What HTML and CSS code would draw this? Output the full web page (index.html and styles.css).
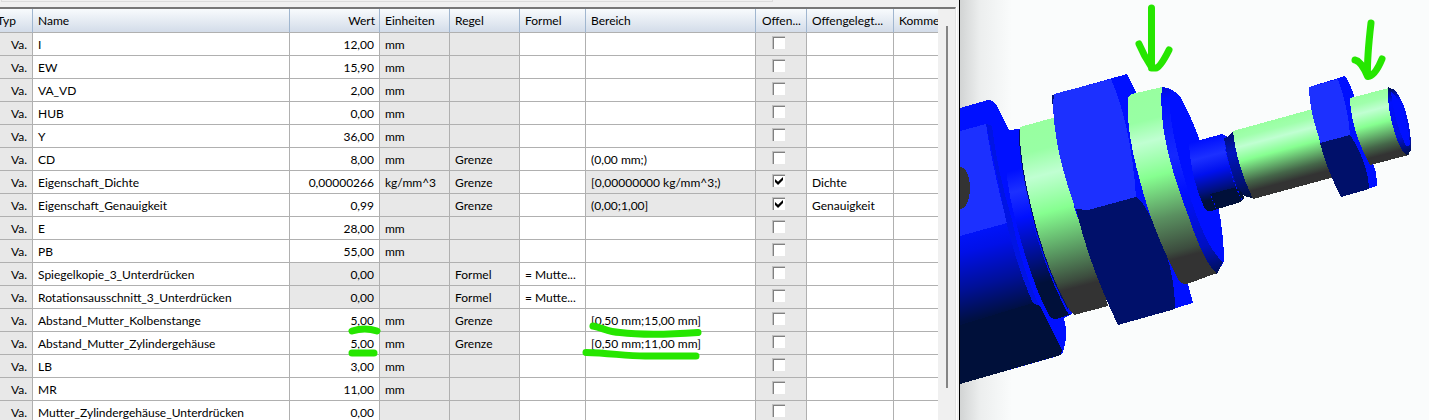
FILE: index.html
```html
<!DOCTYPE html>
<html lang="de">
<head>
<meta charset="utf-8">
<title>Variablentabelle</title>
<link rel="stylesheet" href="styles.css">
</head>
<body>
<main class="app">
<section class="panel">
<div class="group-edge"></div>
<div class="grid">
<div class="grid-view">
<table class="vars">
<colgroup><col class="c-typ"><col class="c-name"><col class="c-wert"><col class="c-einheit"><col class="c-regel"><col class="c-formel"><col class="c-bereich"><col class="c-offen"><col class="c-gelegt"><col class="c-komm"></colgroup>
<thead><tr><th>Typ</th><th>Name</th><th>Wert</th><th>Einheiten</th><th>Regel</th><th>Formel</th><th>Bereich</th><th>Offen...</th><th>Offengelegt...</th><th>Kommentar</th></tr></thead>
<tbody>
<tr><td>Va.</td><td>I</td><td>12,00</td><td>mm</td><td></td><td></td><td></td><td><input type="checkbox" aria-label="I offenlegen"></td><td></td><td></td></tr>
<tr><td>Va.</td><td>EW</td><td>15,90</td><td>mm</td><td></td><td></td><td></td><td><input type="checkbox" aria-label="EW offenlegen"></td><td></td><td></td></tr>
<tr><td>Va.</td><td>VA_VD</td><td>2,00</td><td>mm</td><td></td><td></td><td></td><td><input type="checkbox" aria-label="VA_VD offenlegen"></td><td></td><td></td></tr>
<tr><td>Va.</td><td>HUB</td><td>0,00</td><td>mm</td><td></td><td></td><td></td><td><input type="checkbox" aria-label="HUB offenlegen"></td><td></td><td></td></tr>
<tr><td>Va.</td><td>Y</td><td>36,00</td><td>mm</td><td></td><td></td><td></td><td><input type="checkbox" aria-label="Y offenlegen"></td><td></td><td></td></tr>
<tr><td>Va.</td><td>CD</td><td>8,00</td><td>mm</td><td>Grenze</td><td></td><td>(0,00 mm;)</td><td><input type="checkbox" aria-label="CD offenlegen"></td><td></td><td></td></tr>
<tr><td>Va.</td><td>Eigenschaft_Dichte</td><td>0,00000266</td><td>kg/mm^3</td><td>Grenze</td><td></td><td class="locked">[0,00000000 kg/mm^3;)</td><td><input type="checkbox" checked aria-label="Dichte offenlegen"></td><td>Dichte</td><td></td></tr>
<tr><td>Va.</td><td>Eigenschaft_Genauigkeit</td><td>0,99</td><td></td><td>Grenze</td><td></td><td class="locked">(0,00;1,00]</td><td><input type="checkbox" checked aria-label="Genauigkeit offenlegen"></td><td>Genauigkeit</td><td></td></tr>
<tr><td>Va.</td><td>E</td><td>28,00</td><td>mm</td><td></td><td></td><td></td><td><input type="checkbox" aria-label="E offenlegen"></td><td></td><td></td></tr>
<tr><td>Va.</td><td>PB</td><td>55,00</td><td>mm</td><td></td><td></td><td></td><td><input type="checkbox" aria-label="PB offenlegen"></td><td></td><td></td></tr>
<tr><td>Va.</td><td>Spiegelkopie_3_Unterdrücken</td><td class="locked">0,00</td><td></td><td>Formel</td><td>= Mutte...</td><td></td><td><input type="checkbox" aria-label="Spiegelkopie offenlegen"></td><td></td><td></td></tr>
<tr><td>Va.</td><td>Rotationsausschnitt_3_Unterdrücken</td><td class="locked">0,00</td><td></td><td>Formel</td><td>= Mutte...</td><td></td><td><input type="checkbox" aria-label="Rotationsausschnitt offenlegen"></td><td></td><td></td></tr>
<tr><td>Va.</td><td>Abstand_Mutter_Kolbenstange</td><td>5,00</td><td>mm</td><td>Grenze</td><td></td><td>[0,50 mm;15,00 mm]</td><td><input type="checkbox" aria-label="Abstand Kolbenstange offenlegen"></td><td></td><td></td></tr>
<tr><td>Va.</td><td>Abstand_Mutter_Zylindergehäuse</td><td>5,00</td><td>mm</td><td>Grenze</td><td></td><td>[0,50 mm;11,00 mm]</td><td><input type="checkbox" aria-label="Abstand Zylindergehäuse offenlegen"></td><td></td><td></td></tr>
<tr><td>Va.</td><td>LB</td><td>3,00</td><td>mm</td><td></td><td></td><td></td><td><input type="checkbox" aria-label="LB offenlegen"></td><td></td><td></td></tr>
<tr><td>Va.</td><td>MR</td><td>11,00</td><td>mm</td><td></td><td></td><td></td><td><input type="checkbox" aria-label="MR offenlegen"></td><td></td><td></td></tr>
<tr><td>Va.</td><td>Mutter_Zylindergehäuse_Unterdrücken</td><td>0,00</td><td></td><td></td><td></td><td></td><td><input type="checkbox" aria-label="Mutter offenlegen"></td><td></td><td></td></tr>
</tbody>
</table>
</div>
<div class="scrollbar"><div class="thumb"></div></div>
</div>
<svg class="marks" width="959" height="420" viewBox="0 0 959 420" aria-hidden="true">
<path d="M352 331Q365 327 377 331M352 353H374M593 326C603 328 608 332 620 332.500Q648 336 698 332.500M586 352.500C610 353 625 356 645 356H696"/>
</svg>
</section>
<section class="viewer">
<svg class="model" viewBox="960 0 469 420" preserveAspectRatio="xMinYMin slice" role="img" aria-label="Zylinder mit Muttern, 3D-Ansicht">
<defs>
<linearGradient id="ring1" gradientUnits="userSpaceOnUse" x1="1037" y1="122" x2="1086" y2="311"><stop offset="0" stop-color="#98ffa0"/><stop offset=".14" stop-color="#98ffa4"/><stop offset=".27" stop-color="#c0ffd2"/><stop offset=".46" stop-color="#86ff90"/><stop offset=".67" stop-color="#5a9a62"/><stop offset=".83" stop-color="#3c4c3e"/><stop offset=".87" stop-color="#333"/></linearGradient>
<linearGradient id="ring2" gradientUnits="userSpaceOnUse" x1="1146" y1="92" x2="1195" y2="280"><stop offset="0" stop-color="#98ffa0"/><stop offset=".14" stop-color="#98ffa4"/><stop offset=".25" stop-color="#c0ffd2"/><stop offset=".43" stop-color="#86ff90"/><stop offset=".65" stop-color="#5a9060"/><stop offset=".83" stop-color="#3c4c3e"/><stop offset=".87" stop-color="#333"/></linearGradient>
<linearGradient id="rod" gradientUnits="userSpaceOnUse" x1="1272" y1="120" x2="1290" y2="188"><stop offset="0" stop-color="#98ffa0"/><stop offset=".12" stop-color="#a0ffac"/><stop offset=".25" stop-color="#c0ffd2"/><stop offset=".45" stop-color="#86ff90"/><stop offset=".76" stop-color="#456649"/><stop offset=".9" stop-color="#333"/></linearGradient>
<linearGradient id="tip" gradientUnits="userSpaceOnUse" x1="1369" y1="93" x2="1387" y2="161"><stop offset="0" stop-color="#98ffa0"/><stop offset=".12" stop-color="#a0ffac"/><stop offset=".25" stop-color="#c0ffd2"/><stop offset=".45" stop-color="#86ff90"/><stop offset=".76" stop-color="#456649"/><stop offset=".9" stop-color="#333"/></linearGradient>
<linearGradient id="tube" gradientUnits="userSpaceOnUse" x1="1014" y1="130" x2="1062" y2="318"><stop offset="0" stop-color="#0010ff"/><stop offset=".2" stop-color="#0010ff"/><stop offset=".31" stop-color="#1c30ff"/><stop offset=".45" stop-color="#0010ff"/><stop offset=".68" stop-color="#001080"/><stop offset=".8" stop-color="#00103a"/></linearGradient>
<linearGradient id="body" gradientUnits="userSpaceOnUse" x1="980" y1="225" x2="1002" y2="312"><stop offset="0" stop-color="#0014ff"/><stop offset=".25" stop-color="#0010e8"/><stop offset=".65" stop-color="#001098"/><stop offset="1" stop-color="#001042"/></linearGradient>
<linearGradient id="neck" gradientUnits="userSpaceOnUse" x1="1208" y1="138" x2="1226" y2="206"><stop offset="0" stop-color="#0010ff"/><stop offset=".25" stop-color="#1c30ff"/><stop offset=".48" stop-color="#0010f0"/><stop offset=".73" stop-color="#001080"/><stop offset=".86" stop-color="#00103a"/></linearGradient>
<linearGradient id="collar" gradientUnits="userSpaceOnUse" x1="1229" y1="132" x2="1247" y2="199"><stop offset="0" stop-color="#00106a"/><stop offset=".3" stop-color="#0014c0"/><stop offset=".75" stop-color="#001078"/><stop offset="1" stop-color="#00103a"/></linearGradient>
<linearGradient id="chamfer" gradientUnits="userSpaceOnUse" x1="1168" y1="88" x2="1216" y2="273"><stop offset="0" stop-color="#0010e0"/><stop offset=".05" stop-color="#0010ff"/><stop offset=".35" stop-color="#1428ff"/><stop offset=".55" stop-color="#0010ff"/><stop offset=".85" stop-color="#0010c0"/><stop offset="1" stop-color="#001058"/></linearGradient>
<linearGradient id="tipedge" gradientUnits="userSpaceOnUse" x1="1390" y1="88" x2="1408" y2="156"><stop offset="0" stop-color="#00105a"/><stop offset=".2" stop-color="#0010ff"/><stop offset=".7" stop-color="#0010e0"/><stop offset="1" stop-color="#00103a"/></linearGradient>
</defs>
<g shape-rendering="crispEdges">
<path fill="#0010ff" d="M960 108L988 100Q994 100 997 106L1009 130L1020 129L1072 314L1064 318Q1069 338 1062 354L1058 356L960 384Z"/>
<path fill="#1c30ff" d="M960 131L986 124Q992 165 1007 223L960 236Z"/>
<path fill="url(#body)" d="M960 236L1007 223Q1018 270 1033 303L960 325Z"/>
<path fill="#0014e4" d="M986 124L992 126Q997 170 1012 220Q1022 268 1039 306L1033 303Q1010 250 1000 190Z"/>
<path fill="#00103a" d="M960 325L1033 303L1040 306L1062 350L1061 355L960 384Z"/>
<ellipse fill="#333" cx="960" cy="188" rx="10" ry="21"/>
<path fill="url(#tube)" d="M1009 130L1020 129Q1022 180 1041 240Q1056 290 1071 314L1057 319Q1051 320 1048 313C1036 292 1021 245 1013 210C1006 180 1003 155 1009 130Z"/>
<path fill="none" stroke="#0010ff" stroke-width="3" d="M1031 210Q1046 270 1070 314"/>
<path fill="url(#ring1)" d="M1020 127L1056 117L1108 306L1074 315Q1060 300 1049 267Q1037 235 1031 208Q1018 150 1020 127Z"/>
<path fill="none" stroke="#001068" d="M1019 130Q1020 165 1031 208Q1044 265 1068 309"/>
<path fill="#0010ff" d="M1052 95L1127 74L1137 94L1193 303L1118 325L1075 210Z"/>
<path fill="#001078" d="M1052 95L1055 95L1054 105L1052 104Z"/>
<path fill="#1c30ff" d="M1054 94L1111 79Q1131 125 1136 197L1088 210H1076Q1054 150 1053 104Z"/>
<path fill="#00106a" d="M1076 209L1088 210L1136 197L1142 202Q1175 255 1175 309L1118 325Q1089 265 1076 209Z"/>
<path fill="url(#ring2)" d="M1128 97L1132 94L1162 87L1217 273L1187 284Q1182 285 1178 279Q1151 227 1139 177Q1126 130 1128 97Z"/>
<path fill="#0010ff" d="M1162 87Q1174 88 1181 98Q1204 140 1218 205Q1224 236 1224 261L1217 274Q1204 263 1188 215C1172 173 1158 126 1162 87Z"/>
<path fill="url(#chamfer)" d="M1162 87L1171 90C1166 111 1178 159 1191 200Q1207 249 1223 262L1217 274Q1204 263 1188 215C1172 173 1158 126 1162 87Z"/>
<path fill="url(#neck)" d="M1189 145Q1191 141 1197 141L1222 134L1230 138L1244 198L1241 202L1211 211Q1206 212 1204 207Q1191 178 1189 145Z"/>
<path fill="url(#collar)" d="M1224 138L1228 137L1233 131L1252 198L1244 196Q1229 175 1224 138Z"/>
<path fill="#00103a" d="M1210 194L1237 187L1241 200L1216 208Z"/>
<path fill="none" stroke="#0010ff" stroke-dasharray="2 2" d="M1225 145Q1229 174 1242 200M1211 196L1216 208"/>
<path fill="url(#rod)" d="M1233 131L1320 107L1338 176L1253 199Q1236 163 1233 131Z"/>
<path fill="#0010ff" d="M1309 87L1345 76Q1350 83 1355 98L1371 159Q1377 170 1377 186L1341 197L1320 143Z"/>
<path fill="#1c30ff" d="M1309 87L1338 79Q1348 107 1350 135L1321 143Q1309 110 1309 87Z"/>
<path fill="#00106a" d="M1320 143L1350 135Q1368 163 1369 189L1341 197Q1327 170 1320 143Z"/>
<path fill="url(#tip)" d="M1350 98L1389 88L1409 155L1370 165Q1351 130 1350 98Z"/>
<path fill="url(#tipedge)" d="M1388 87L1395 90Q1408 106 1411 142V150L1407 156Q1399 149 1394 130Q1387 108 1388 87Z"/>
<path fill="#0010ff" d="M1391 92Q1406 103 1410 144Q1408 149 1405 144Q1394 120 1391 92Z"/>
</g>
<g class="arrows">
<path d="M1151.500 8V68M1139 44Q1144 56 1151.500 67M1169 50Q1160 68 1156 68H1152"/>
<path d="M1371 23Q1367 57 1367.500 76M1355 60Q1361 61 1367.500 76M1382 59Q1375 76 1368 76.500"/>
</g>
</svg>
</section>
</main>
</body>
</html>
```
FILE: styles.css
```css
* { box-sizing: border-box; }

body {
  margin: 0;
  font: 12px/16px Lato, "Open Sans", sans-serif;
  color: #000;
}

.app {
  display: flex;
  height: 100vh;
  overflow: hidden;
  background: #fafcfc;
}

.panel {
  position: relative;
  display: flex;
  flex-direction: column;
  flex: 0 0 960px;
  min-width: 0;
  background: #f0f0f0;
  border-right: 1px solid #000;
}

.group-edge {
  flex: none;
  width: 772px;
  height: 2px;
  margin: 0 0 5px 1px;
  border: solid #dcdcdc;
  border-width: 0 1px 1px;
}

.grid {
  display: flex;
  flex: 1;
  min-height: 0;
  margin-right: 3px;
  border-top: 2px solid #696969;
  border-top-color: #777;
  border-right: 1px solid #e3e3e3;
  box-shadow: 1px 0 #fff;
}

.grid-view {
  flex: 1;
  min-width: 0;
  overflow: hidden;
  background: #fff;
}

.vars {
  table-layout: fixed;
  width: 1005px;
  margin-left: -8px;
  border-collapse: separate;
  border-spacing: 0;
}

.c-typ { width: 41px; }
.c-name { width: 257px; }
.c-wert { width: 90px; }
.c-einheit, .c-regel { width: 70px; }
.c-formel { width: 66px; }
.c-bereich { width: 170px; }
.c-offen { width: 51px; }
.c-gelegt { width: 87px; }
.c-komm { width: 103px; }

.vars th,
.vars td {
  height: 23px;
  padding: 2px 5px 0;
  overflow: hidden;
  font-weight: 400;
  text-align: left;
  white-space: nowrap;
  border: solid #b0b0b0;
  border-width: 0 1px 1px 0;
}

.vars th {
  height: 24px;
  padding-top: 0;
  background: linear-gradient(#f8fbfd, #d3dce9);
  border-right-color: #a0b6cf;
}

.vars th:nth-child(3) { padding-right: 4px; text-align: right; }
.vars th:nth-child(8) { padding: 0 0 0 6px; }

.vars td:nth-child(1) { padding-left: 19px; }
.vars td:nth-child(3) { text-align: right; }
.vars td:nth-child(8) { padding: 3px 0 0 16px; vertical-align: top; }

.vars td:nth-child(1),
.vars td:nth-child(4),
.vars td:nth-child(5),
.vars td:nth-child(8),
.vars .locked { background: #e8e8e8; }

.vars input {
  appearance: none;
  display: block;
  width: 13px;
  height: 13px;
  margin: 0;
  background: #fff;
  border: solid #c0c0c0;
  border-width: 1px 0 0 1px;
  box-shadow: inset 1px 1px #808080;
}

.vars input:checked::before {
  content: "";
  display: block;
  width: 8px;
  height: 8px;
  margin: 2px;
  background: #000;
  clip-path: polygon(0 25%, 38% 60%, 100% 0, 100% 38%, 38% 100%, 0 62%);
}

.scrollbar {
  display: flex;
  flex: 0 0 17px;
  padding: 17px 0 32px 8px;
}

.thumb {
  width: 2px;
  background: #858585;
}

.marks {
  position: absolute;
  top: 0;
  left: 0;
  pointer-events: none;
}

.marks,
.arrows {
  fill: none;
  stroke: #26e600;
  stroke-width: 7px;
  stroke-linecap: round;
  stroke-linejoin: round;
}

.viewer {
  flex: 1;
  min-width: 0;
  background: linear-gradient(90deg, #d2d4d4, #eceeee 20px, #fafcfc 52px);
}

.model {
  display: block;
  width: 100%;
  height: 100%;
}
```
